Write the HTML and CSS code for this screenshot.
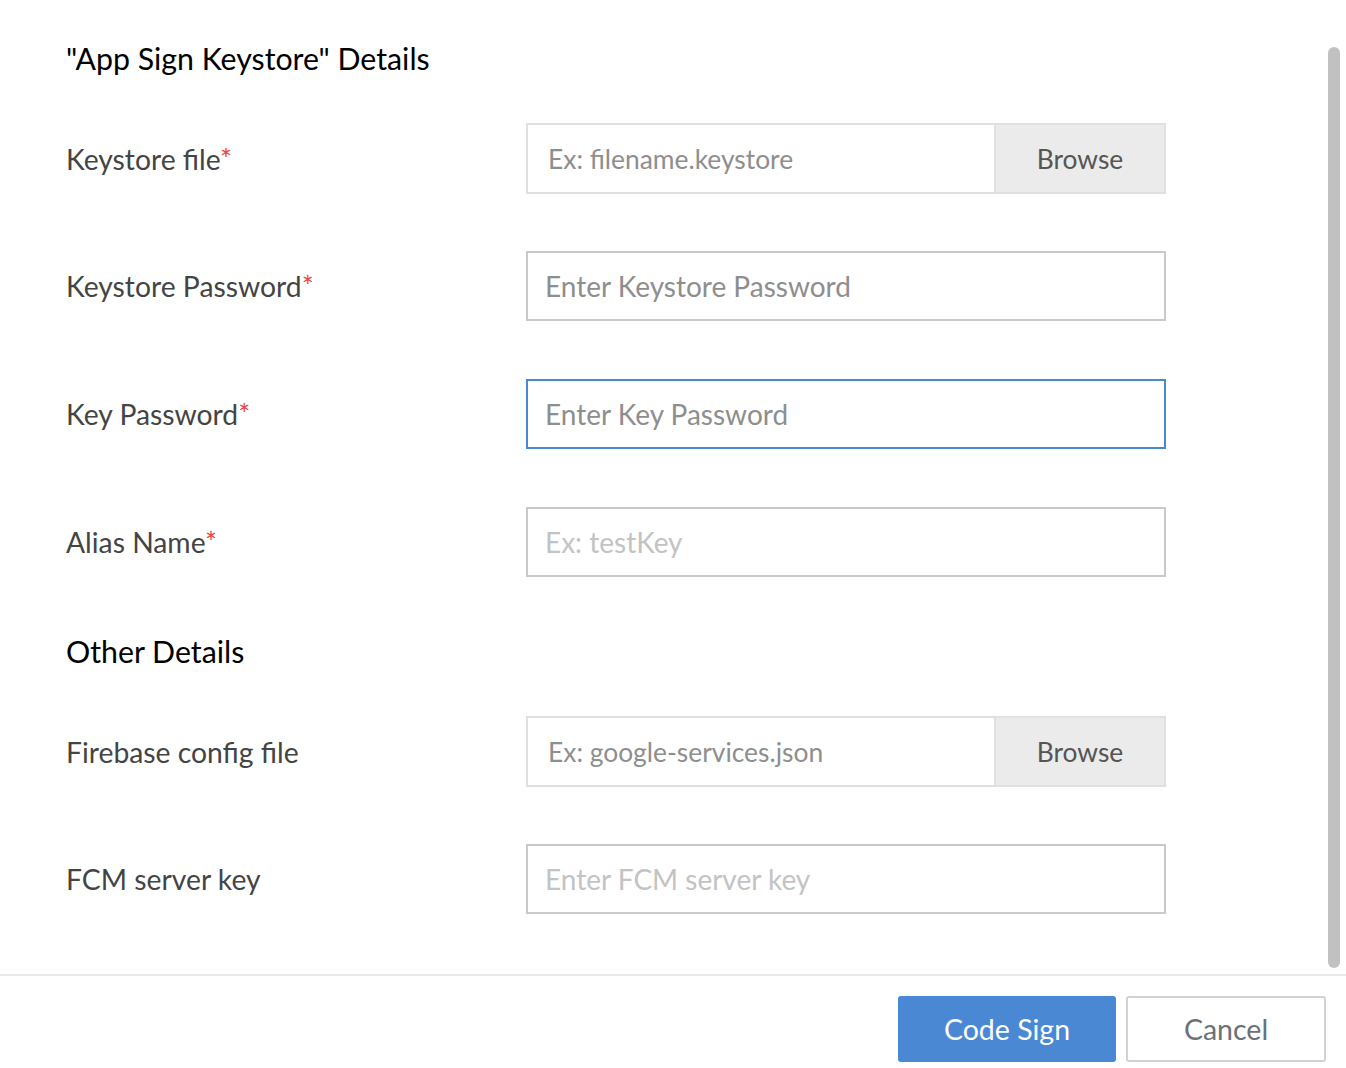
FILE: index.html
```html
<!DOCTYPE html>
<html lang="en">
<head>
<meta charset="utf-8">
<title>App Sign Keystore</title>
<link rel="stylesheet" href="styles.css">
</head>
<body>
<div class="modal">
  <div class="body">
    <div class="form">
      <h2 class="section-title">"App Sign Keystore" Details</h2>
      <div class="rows">
        <div class="row">
          <label class="label">Keystore file<span class="req">*</span></label>
          <div class="file-field">
            <input class="file-input" type="text" placeholder="Ex: filename.keystore">
            <button class="browse" type="button">Browse</button>
          </div>
        </div>
        <div class="row">
          <label class="label">Keystore Password<span class="req">*</span></label>
          <input class="text-input" type="password" placeholder="Enter Keystore Password">
        </div>
        <div class="row">
          <label class="label">Key Password<span class="req">*</span></label>
          <input class="text-input focused" type="password" placeholder="Enter Key Password">
        </div>
        <div class="row">
          <label class="label">Alias Name<span class="req">*</span></label>
          <input class="text-input light" type="text" placeholder="Ex: testKey">
        </div>
      </div>
      <h2 class="section-title second">Other Details</h2>
      <div class="rows">
        <div class="row">
          <label class="label">Firebase config file</label>
          <div class="file-field">
            <input class="file-input" type="text" placeholder="Ex: google-services.json">
            <button class="browse" type="button">Browse</button>
          </div>
        </div>
        <div class="row">
          <label class="label">FCM server key</label>
          <input class="text-input light" type="text" placeholder="Enter FCM server key">
        </div>
      </div>
    </div>
    <div class="scrollbar"></div>
  </div>
  <div class="footer">
    <button class="btn primary" type="button">Code Sign</button>
    <button class="btn secondary" type="button">Cancel</button>
  </div>
</div>
</body>
</html>
```

FILE: styles.css
```css
* { box-sizing: border-box; }
html, body { margin: 0; padding: 0; background: #fff; }
body { font-family: Lato, "Open Sans", sans-serif; }

.modal {
  width: 1346px;
  height: 1068px;
  display: flex;
  flex-direction: column;
  overflow: hidden;
}

.body {
  position: relative;
  height: 974px;
  flex: none;
  padding: 40px 0 0 66px;
}

.scrollbar {
  position: absolute;
  right: 6px;
  top: 47px;
  bottom: 6px;
  width: 12px;
  border-radius: 6px;
  background: #c1c1c1;
}

.section-title {
  margin: 0;
  font-size: 30.3px;
  font-weight: 400;
  line-height: 36px;
  color: #000;
}

.section-title.second {
  margin-top: 56px;
}

.rows {
  display: flex;
  flex-direction: column;
  gap: 58px;
  margin-top: 47px;
}

.row {
  display: grid;
  grid-template-columns: 460px 640px;
  align-items: center;
  height: 70px;
}

.label {
  font-size: 28.3px;
  color: #444;
  line-height: 34px;
}

.req {
  color: #e8483f;
}

.text-input {
  width: 640px;
  height: 70px;
  border: 2px solid #c9c9cc;
  border-radius: 0;
  padding: 0 17px;
  font-family: inherit;
  font-size: 28px;
  color: #333;
  outline: none;
  background: #fff;
}

.text-input::placeholder { color: #8e8e8e; }
.text-input.light::placeholder { color: #c3c3c3; }
.text-input.focused { border-color: #4a88d4; }

.file-field {
  display: flex;
  width: 640px;
  height: 71px;
  border: 2px solid #e0e0e0;
}

.file-input {
  flex: 1;
  min-width: 0;
  border: none;
  padding: 0 20px;
  font-family: inherit;
  font-size: 26.4px;
  outline: none;
  background: #fff;
}

.file-input::placeholder { color: #8e8e8e; }

.browse {
  width: 170px;
  border: none;
  border-left: 2px solid #e0e0e0;
  background: #ebebeb;
  font-family: inherit;
  font-size: 26.4px;
  color: #555;
  padding: 0;
}

.footer {
  flex: none;
  border-top: 2px solid #e8e8e8;
  display: flex;
  justify-content: flex-end;
  gap: 10px;
  padding: 20px 20px 0 0;
}

.btn {
  height: 66px;
  font-family: inherit;
  font-size: 28.5px;
  border-radius: 3px;
  padding: 0;
}

.btn.primary {
  width: 218px;
  background: #4a88d4;
  color: #fff;
  border: none;
}

.btn.secondary {
  width: 200px;
  background: #fff;
  color: #6b7178;
  border: 2px solid #d2d2d2;
}
```
